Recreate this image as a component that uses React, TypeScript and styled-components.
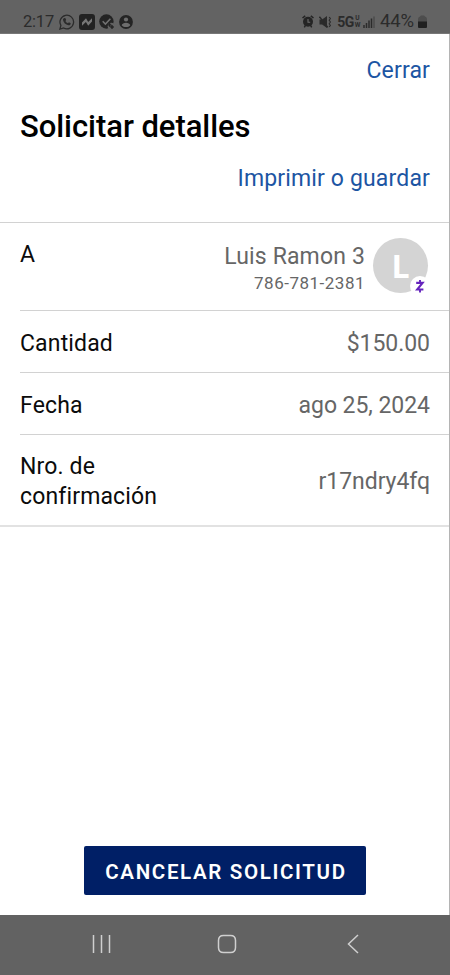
import React from 'react';
import styled, { createGlobalStyle } from 'styled-components';

const GlobalStyle = createGlobalStyle`
  * { box-sizing: border-box; }
  body { margin: 0; background: #fff; }
`;

const Screen = styled.div`
  width: 450px;
  height: 975px;
  overflow: hidden;
  display: flex;
  flex-direction: column;
  background: #fff;
  font-family: Roboto, sans-serif;
  color: #0b0b0b;
`;

const StatusBar = styled.header`
  flex: none;
  height: 34px;
  padding: 9px 23px 0 23px;
  display: flex;
  justify-content: space-between;
  background: #636363;
  border-bottom: 1px solid #777;
  color: #2b2b2b;
`;

const StatusGroup = styled.div<{ $gap: number }>`
  display: flex;
  align-items: center;
  height: 25px;
  gap: ${({ $gap }) => $gap}px;
`;

const StatusText = styled.span<{ $width: number; $size: number }>`
  width: ${({ $width }) => $width}px;
  font-size: ${({ $size }) => $size}px;
  line-height: 25px;
  letter-spacing: -0.2px;
  white-space: nowrap;
`;

const Network = styled.span`
  display: flex;
  align-items: center;
  font-size: 14px;
  line-height: 14px;
  font-weight: 700;
  letter-spacing: -0.4px;
`;

const NetworkStack = styled.span`
  display: flex;
  flex-direction: column;
  align-items: center;
  width: 7px;
  margin-right: 2px;
  font-size: 6.5px;
  line-height: 7px;
  letter-spacing: 0;
`;

const Content = styled.main`
  flex: 1;
  display: flex;
  flex-direction: column;
  border-right: 1px solid #b4b4b4;
`;

const Link = styled.button`
  align-self: flex-end;
  margin: 0 19px 0 0;
  padding: 0;
  border: 0;
  background: none;
  color: #1c55a3;
  font: 400 23px/30px Roboto, sans-serif;
  letter-spacing: 0.15px;
`;

const TopActions = styled.div`
  display: flex;
  flex-direction: column;
  height: 188px;
  padding-top: 22px;
`;

const Title = styled.h1`
  margin: 23px 0 19px 20px;
  font-size: 31px;
  line-height: 36px;
  font-weight: 500;
  letter-spacing: -0.05px;
  color: #000;
`;

const Details = styled.dl`
  margin: 0;
  padding-left: 20px;
  border-top: 1px solid #d2d2d2;
  border-bottom: 2px solid #e2e2e2;
`;

const Row = styled.div<{ $height: number; $top?: boolean }>`
  display: flex;
  height: ${({ $height }) => $height}px;
  align-items: ${({ $top }) => ($top ? 'flex-start' : 'center')};
  justify-content: space-between;
  padding: ${({ $top }) => ($top ? '17px 21px 0 0' : '4px 19px 0 0')};
  & + & { border-top: 1px solid #d2d2d2; }
`;

const Label = styled.dt`
  width: 160px;
  font-size: 23px;
  line-height: 30px;
  letter-spacing: 0.15px;
`;

const Value = styled.dd`
  margin: 0;
  font-size: 23px;
  line-height: 30px;
  letter-spacing: -0.05px;
  color: #666;
`;

const Recipient = styled.dd`
  display: flex;
  margin: 0;
  gap: 8px;
  color: #666;
`;

const RecipientText = styled.div`
  display: flex;
  flex-direction: column;
  align-items: flex-end;
  padding-top: 2px;
`;

const Name = styled.span`
  font-size: 23px;
  line-height: 30px;
  letter-spacing: 0.15px;
`;

const Phone = styled.span`
  font-size: 17px;
  line-height: 23px;
  letter-spacing: 0.5px;
`;

const Avatar = styled.div`
  position: relative;
  width: 55px;
  height: 55px;
  margin-top: -2px;
  border-radius: 50%;
  background: #d4d4d4;
  color: #fff;
  font: 700 32px/56px "Open Sans", sans-serif;
  text-align: center;
`;

const ZelleBadge = styled.span`
  position: absolute;
  right: -2px;
  bottom: -3px;
  width: 20px;
  height: 20px;
  border-radius: 50%;
  background: #fff;
  svg { display: block; }
`;

const Footer = styled.footer`
  margin-top: auto;
  padding-bottom: 20px;
  display: flex;
  justify-content: center;
`;

const CancelButton = styled.button`
  width: 282px;
  height: 49px;
  padding: 2px 0 0 3px;
  border: 0;
  border-radius: 2px;
  background: #001f66;
  color: #fff;
  font: 600 20.5px/30px Roboto, sans-serif;
  letter-spacing: 1.65px;
  white-space: nowrap;
`;

const NavBar = styled.nav`
  flex: none;
  height: 60px;
  padding: 17px 85px 0 89px;
  display: flex;
  justify-content: space-between;
  background: #626262;
`;

const NavIcon = ({ d }: { d: string }) => (
  <svg width="24" height="24" viewBox="0 0 24 24" fill="none" stroke="#cfcfcf" strokeWidth="1.5">
    <path d={d} />
  </svg>
);

const WhatsappIcon = () => (
  <svg width="16" height="16" viewBox="0 0 16 16">
    <path d="M.9 15.1l1-3.7A6.8 6.8 0 1 1 4.6 14z" fill="none" stroke="#2b2b2b" strokeWidth="1.3" />
    <path d="M5.5 4.1l1 .1.7 1.8-.8.9c.6 1.1 1.4 1.9 2.6 2.4l.9-1 1.8.9c.2 1.3-1 2.2-2.2 2-2.9-.5-5-2.6-5.5-5.2-.1-.8.6-1.8 1.5-1.9z" fill="#2b2b2b" />
  </svg>
);

const NewsIcon = () => (
  <svg width="16" height="16" viewBox="0 0 16 16">
    <rect width="16" height="16" rx="3" fill="#222" />
    <path d="M3 11.7V8.5l4-4.3 2.2 3.7L13 4.3v3.2l-3.8 4.2-2.3-3.8z" fill="#777" />
  </svg>
);

const CheckIcon = () => (
  <svg width="16" height="16" viewBox="0 0 16 16">
    <circle cx="7.4" cy="7.5" r="7.2" fill="#242424" />
    <path d="M3.7 7.3l2.7 2.8 5-5.4" fill="none" stroke="#727272" strokeWidth="1.5" />
    <circle cx="12.2" cy="12.2" r="3.5" fill="#636363" />
    <path d="M10.6 8.8v4M8.9 10.8h3.4M13 11v4M11.3 13h3.5" stroke="#242424" strokeWidth="1.3" />
  </svg>
);

const PersonIcon = () => (
  <svg width="14" height="14" viewBox="0 0 14 14">
    <circle cx="7" cy="7" r="6.9" fill="#242424" />
    <circle cx="7" cy="4.5" r="2.1" fill="#6d6d6d" />
    <path d="M2.7 10.2c.6-3.4 8-3.4 8.6 0-1.7 2.5-6.8 2.5-8.6 0z" fill="#6d6d6d" />
  </svg>
);

const AlarmIcon = () => (
  <svg width="12" height="13" viewBox="0 0 12 13">
    <path d="M.5 3L3.2.8M11.5 3L8.8.8M2.3 12.3l1-1.6M9.7 12.3l-1-1.6" stroke="#242424" strokeWidth="1.5" />
    <circle cx="6" cy="6.8" r="5" fill="#242424" />
    <path d="M6 4v3.2h2.2" fill="none" stroke="#6d6d6d" strokeWidth="1.1" />
  </svg>
);

const MuteIcon = () => (
  <svg width="13" height="14" viewBox="0 0 13 14">
    <path d="M.5 4.5h2.6L8 1v12L3.1 9.5H.5z" fill="#2b2b2b" />
    <path d="M.4 1.6l8.4 10.8" stroke="#2b2b2b" strokeWidth="1.5" />
    <path d="M10.2 2l1.2 1.6-1.2 1.7 1.2 1.7-1.2 1.7 1.2 1.7-1.2 1.6" fill="none" stroke="#2b2b2b" strokeWidth="1.1" />
  </svg>
);

const SignalIcon = () => (
  <svg width="12" height="12" viewBox="0 0 12 12">
    <path d="M1 9v3M3.5 7v5M6 4.5V12M8.5 2.5V12" stroke="#2b2b2b" strokeWidth="1.5" />
    <path d="M11 .5V12" stroke="#4b4b4b" strokeWidth="1.5" />
  </svg>
);

const BatteryIcon = () => (
  <svg width="9" height="13" viewBox="0 0 9 13">
    <path d="M0 4Q0 2 2 1.5L3 .5h3l1 1Q9 2 9 4v3H0z" fill="#4d4d4d" />
    <path d="M0 6.5h9V12q0 1-1 1H1q-1 0-1-1z" fill="#202020" />
  </svg>
);

const ZelleIcon = () => (
  <svg width="20" height="20" viewBox="0 0 20 20" fill="none" stroke="#6524bd">
    <path d="M6.2 6.9h6.4L7.2 13.5h6.2" strokeWidth="2.1" />
    <path d="M10 4v3M10 13.5v3" strokeWidth="1.9" />
  </svg>
);

const rows = [
  { label: 'Cantidad', value: '$150.00', height: 62 },
  { label: 'Fecha', value: 'ago 25, 2024', height: 62 },
  { label: 'Nro. de confirmación', value: 'r17ndry4fq', height: 91 },
];

export default function App() {
  return (
    <Screen>
      <GlobalStyle />
      <StatusBar>
        <StatusGroup $gap={4}>
          <StatusText $width={32} $size={16.5}>2:17</StatusText>
          <WhatsappIcon />
          <NewsIcon />
          <CheckIcon />
          <PersonIcon />
        </StatusGroup>
        <StatusGroup $gap={5}>
          <AlarmIcon />
          <MuteIcon />
          <Network>
            5G
            <NetworkStack><span>U</span><span>W</span></NetworkStack>
            <SignalIcon />
          </Network>
          <StatusText $width={33} $size={18.5}>44%</StatusText>
          <BatteryIcon />
        </StatusGroup>
      </StatusBar>
      <Content>
        <TopActions>
          <Link>Cerrar</Link>
          <Title>Solicitar detalles</Title>
          <Link>Imprimir o guardar</Link>
        </TopActions>
        <Details>
          <Row $height={87} $top>
            <Label>A</Label>
            <Recipient>
              <RecipientText>
                <Name>Luis Ramon 3</Name>
                <Phone>786-781-2381</Phone>
              </RecipientText>
              <Avatar>
                L
                <ZelleBadge><ZelleIcon /></ZelleBadge>
              </Avatar>
            </Recipient>
          </Row>
          {rows.map(({ label, value, height }) => (
            <Row key={label} $height={height}>
              <Label>{label}</Label>
              <Value>{value}</Value>
            </Row>
          ))}
        </Details>
        <Footer>
          <CancelButton>CANCELAR SOLICITUD</CancelButton>
        </Footer>
      </Content>
      <NavBar>
        <NavIcon d="M4.5 3v18M12.5 3v18M20.5 3v18" />
        <NavIcon d="M8.5 3.5h7q5 0 5 5v7q0 5-5 5h-7q-5 0-5-5v-7q0-5 5-5z" />
        <NavIcon d="M17 3L7.5 12 17 21" />
      </NavBar>
    </Screen>
  );
}
